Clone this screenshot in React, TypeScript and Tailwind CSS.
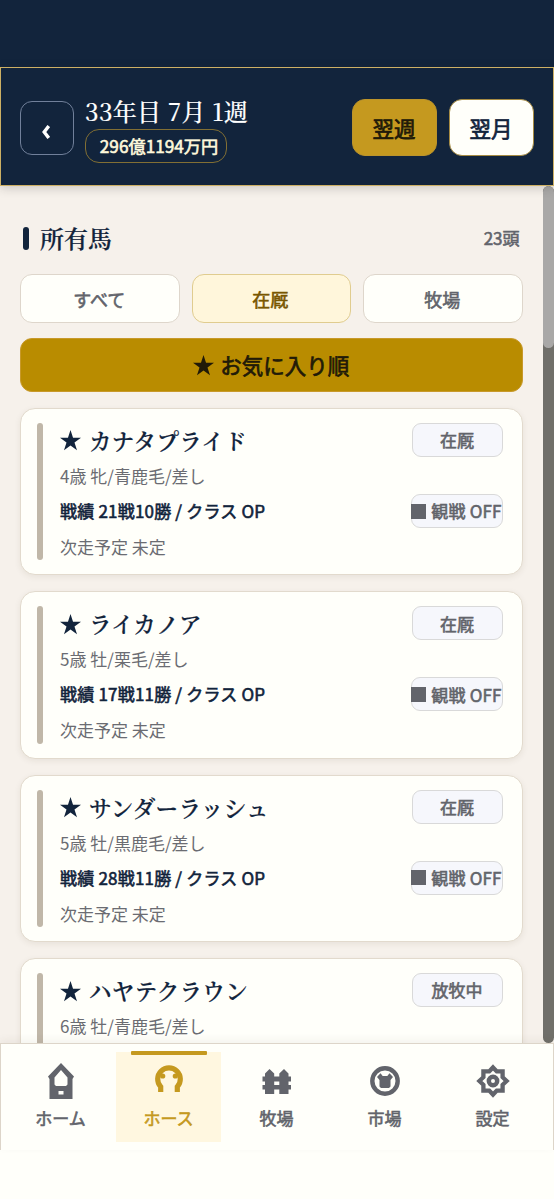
import React from "react";

const serif = "font-['Noto_Serif_CJK_JP','Noto_Serif_JP','Liberation_Serif','Noto_Sans_CJK_JP',serif]";
const heavy = "font-normal [-webkit-text-stroke:0.6px_currentColor]";

type Horse = { name: string; detail: string; record?: string; plan?: string; status: string; watch?: string };

const horses: Horse[] = [
  { name: "カナタプライド", detail: "4歳 牝/青鹿毛/差し", record: "戦績 21戦10勝 / クラス OP", plan: "次走予定 未定", status: "在厩", watch: "観戦 OFF" },
  { name: "ライカノア", detail: "5歳 牡/栗毛/差し", record: "戦績 17戦11勝 / クラス OP", plan: "次走予定 未定", status: "在厩", watch: "観戦 OFF" },
  { name: "サンダーラッシュ", detail: "5歳 牡/黒鹿毛/差し", record: "戦績 28戦11勝 / クラス OP", plan: "次走予定 未定", status: "在厩", watch: "観戦 OFF" },
  { name: "ハヤテクラウン", detail: "6歳 牡/青鹿毛/差し", status: "放牧中" },
];

function Star({ className }: { className: string }) {
  return (
    <svg viewBox="0 0 20 20" className={className} fill="currentColor">
      <path d="M10 0l2.4 7.3H20l-6.2 4.6 2.4 7.4L10 14.8l-6.2 4.5 2.4-7.4L0 7.3h7.6z" />
    </svg>
  );
}

function HorseCard({ horse }: { horse: Horse }) {
  return (
    <article className="flex h-[167.4px] shrink-0 rounded-[15px] border-[1.5px] border-[#e2dacd] bg-[#fffffa] px-4 py-[14px] shadow-[0_2px_6px_rgba(60,50,30,0.08)]">
      <div className="w-[6px] shrink-0 rounded-[3px] bg-[#c0b7a8]" />
      <div className="ml-[17px] flex flex-1 flex-col whitespace-nowrap text-[17px]">
        <h2 className={`${serif} flex h-[35px] items-center pt-px text-[22.5px] font-semibold text-[#12243c] [-webkit-text-stroke:0.2px_currentColor]`}>
          <Star className="mr-[8px] h-[21px] w-[21px]" />
          <span className="tracking-[0.35px]">{horse.name}</span>
        </h2>
        <p className="h-[35px] leading-[35px] text-[#6b6c72]">{horse.detail}</p>
        {horse.record && (
          <p className={`${heavy} h-[35px] leading-[35px] tracking-[0.2px] text-[#12243c]`}>{horse.record}</p>
        )}
        {horse.plan && <p className="h-[35px] leading-[37px] text-[#6b6c72]">{horse.plan}</p>}
      </div>
      <div className={`${heavy} mr-[3px] flex w-[92px] shrink-0 flex-col items-end text-[17px] whitespace-nowrap text-[#62646b]`}>
        <span className="flex h-[34px] w-[91px] items-center justify-center rounded-[9px] border-[1.5px] border-[#d9d9d9] bg-[#f6f7fc]">
          {horse.status}
        </span>
        {horse.watch && (
          <span className="mt-[37px] flex h-[34px] w-[92px] items-center justify-center rounded-[9px] border-[1.5px] border-[#d9d9d9] bg-[#f6f7fc] tracking-[0.2px]">
            <i className="mr-[5px] block h-[15px] w-[15px] shrink-0 bg-[#62646b]" />
            {horse.watch}
          </span>
        )}
      </div>
    </article>
  );
}

function HomeIcon() {
  return (
    <svg viewBox="0 0 36 36" className="h-9 w-9" fill="currentColor">
      <path fillRule="evenodd" d="M18 0L31 13.5L29.5 16V36H6.5V16L5 13.5ZM18 7L11.5 14.5V21.5L13 23H23L24.5 21.5V14.5ZM15.5 28V31.5H20.5V28Z" />
    </svg>
  );
}

function HorseshoeIcon() {
  return (
    <svg viewBox="0 0 36 36" className="h-9 w-9" fill="none" stroke="currentColor">
      <path d="M9.7 29V23.8A11.3 11.3 0 1 1 26.3 23.8V29" strokeWidth="5.2" />
      <circle cx="11.7" cy="13" r="2.6" fill="currentColor" stroke="none" />
      <circle cx="24.3" cy="13" r="2.6" fill="currentColor" stroke="none" />
    </svg>
  );
}

function FenceIcon() {
  return (
    <svg viewBox="0 0 36 36" className="h-9 w-9" fill="currentColor">
      <path d="M6 31V26.5H3.5V22H6V18.5H3.5V13.5H6V10.5L10.5 6L15.2 10.5V13.5H20.3V10.5L25 6L29.5 10.5V13.5H32V18.5H29.5V22H32V26.5H29.5V31H20.3V26.5H15.2V31ZM15.2 18.5V22H20.3V18.5Z" fillRule="evenodd" />
    </svg>
  );
}

function MarketIcon() {
  return (
    <svg viewBox="0 0 36 36" className="h-9 w-9" fill="currentColor">
      <circle cx="18" cy="18" r="12.7" fill="none" stroke="currentColor" strokeWidth="4.4" />
      <path d="M13.5 10.3L15.7 13H20.3L22.5 10.3L26 14L23.5 17V23.5L22 25H14L12.5 23.5V17L10 14Z" />
    </svg>
  );
}

function GearIcon() {
  return (
    <svg viewBox="0 0 36 36" className="h-9 w-9" fill="none" stroke="currentColor">
      <path d="M18 4.4L21.8 8.4H27.6V14.2L31.6 18L27.6 21.8V27.6H21.8L18 31.6L14.2 27.6H8.4V21.8L4.4 18L8.4 14.2V8.4H14.2Z" strokeWidth="4.3" />
      <circle cx="18" cy="18" r="4.2" strokeWidth="4.4" />
    </svg>
  );
}

const tabs = [
  { label: "ホーム", icon: <HomeIcon /> },
  { label: "ホース", icon: <HorseshoeIcon />, active: true },
  { label: "牧場", icon: <FenceIcon /> },
  { label: "市場", icon: <MarketIcon /> },
  { label: "設定", icon: <GearIcon /> },
];

export default function App() {
  return (
    <div className="flex h-[1199px] w-[554px] flex-col overflow-hidden bg-[#fffffa] font-['Noto_Sans_CJK_JP',sans-serif]">
      <div className="h-[67px] shrink-0 bg-[#12243c]" />
      <header className="relative z-10 flex h-[119px] shrink-0 items-center border-[1.5px] border-[#cdb064] bg-[#12243c] pr-[19.5px] pl-[19px] shadow-[0_2px_10px_rgba(30,30,30,0.2)]">
        <button className="mt-[3px] flex h-[54px] w-[54px] items-center justify-center rounded-[12px] border-[1.5px] border-[#71809a] text-white">
          <svg viewBox="0 0 8 14" className="mt-[7px] mr-[2px] h-[14px] w-2" fill="none" stroke="currentColor" strokeWidth="3.4">
            <path d="M6.8 1L2.2 7L6.8 13" />
          </svg>
        </button>
        <div className="mt-[5px] ml-[11px] flex flex-1 flex-col items-start whitespace-nowrap">
          <h1 className={`${serif} h-[33px] text-[24px] leading-[30px] font-medium tracking-[0.3px] text-white [-webkit-text-stroke:0.15px_currentColor]`}>33年目 7月 1週</h1>
          <div className={`${heavy} flex h-[34px] w-[142px] items-center justify-center rounded-[14px] border-[1.5px] border-[#826f34] pt-px pl-[6px] text-[17.2px] text-[#fff9dc]`}>
            296億1194万円
          </div>
        </div>
        <div className="mt-[2px] flex gap-3 text-[21.5px] font-normal [-webkit-text-stroke:0.7px_currentColor]">
          <button className="h-[57px] w-[85px] rounded-[13px] border border-[#bd942a] bg-[#c5991f] pt-px text-[#211a08]">翌週</button>
          <button className="h-[57px] w-[85px] rounded-[13px] border-[1.5px] border-[#a68b43] bg-[#fffffa] pt-px text-[#12243c]">翌月</button>
        </div>
      </header>

      <div className="flex h-[857px] shrink-0 overflow-hidden bg-[#f6f1eb]">
        <main className="flex w-[542.5px] shrink-0 flex-col pr-5 pl-5">
          <div className="flex h-[88px] shrink-0 items-center pt-[16px] pl-[3px]">
            <div className="h-[23px] w-[6px] rounded-[3px] bg-[#12243c]" />
            <h2 className={`${serif} ml-[11px] text-[24px] font-semibold text-[#12243c] [-webkit-text-stroke:0.2px_currentColor]`}>所有馬</h2>
            <span className={`${heavy} mr-[3px] ml-auto text-[17px] text-[#62646b]`}>23頭</span>
          </div>
          <div className={`${heavy} grid h-[49px] shrink-0 grid-cols-3 gap-3 text-[18px] text-[#62646b]`}>
            <button className="rounded-[12px] border-[1.5px] border-[#ded6cb] bg-[#fffffa] pt-[2px] pr-px">すべて</button>
            <button className="rounded-[12px] border-[1.5px] border-[#e0cc8f] bg-[#fff6db] pt-[2px] pr-[2px] text-[#795600]">在厩</button>
            <button className="rounded-[12px] border-[1.5px] border-[#ded6cb] bg-[#fffffa] pt-[2px] pr-px">牧場</button>
          </div>
          <button className="mt-[15px] flex h-[54px] shrink-0 items-center justify-center rounded-[12px] border border-[#c8992a] bg-[#b98c00] pt-px text-[21.5px] font-normal text-[#211a08] [-webkit-text-stroke:0.7px_currentColor]">
            <Star className="mr-[6px] h-[21px] w-[21px]" />
            お気に入り順
          </button>
          <div className="mt-4 flex flex-col gap-4">
            {horses.map((h) => (
              <HorseCard key={h.name} horse={h} />
            ))}
          </div>
        </main>
        <div className="h-[857px] w-[11.5px] shrink-0 overflow-hidden rounded-[6px] bg-[#706f6a]">
          <div className="h-[162px] rounded-[6px] bg-[#a9a8a7]" />
        </div>
      </div>

      <nav className="z-10 flex h-[107px] shrink-0 gap-[3px] border-x-[1.5px] border-t-[1.5px] border-[#ddd5c9] bg-[#fffffa] px-[7px] pt-2 shadow-[0_-3px_8px_rgba(60,50,30,0.06)]">
        {tabs.map((t) => (
          <button
            key={t.label}
            className={
              t.active
                ? "relative flex h-[90px] w-[105px] flex-col items-center bg-[#fff7e0] pt-[11px] text-[#c5991f]"
                : "flex h-[90px] w-[105px] flex-col items-center pt-[11px] text-[#62646b]"
            }
          >
            {t.active && <span className="absolute -top-px left-[15px] h-1 w-[76px] rounded-[1px] bg-[#c5991f]" />}
            {t.icon}
            <span className={`${heavy} mt-[5px] text-[17px] leading-[28px]`}>{t.label}</span>
          </button>
        ))}
      </nav>
    </div>
  );
}
